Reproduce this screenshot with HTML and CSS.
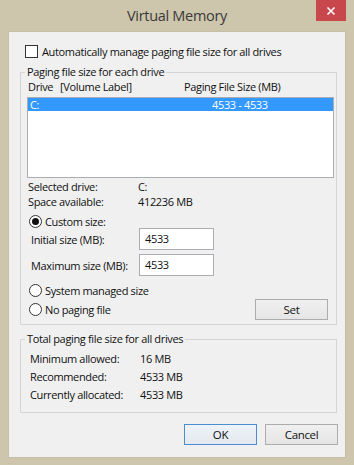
FILE: index.html
```html
<!DOCTYPE html>
<html>
<head>
<meta charset="utf-8">
<link rel="stylesheet" href="styles.css">
</head>
<body>
<div class="window">
  <div class="titlebar">
    <span class="title">Virtual Memory</span>
    <div class="close"><svg width="10" height="10" viewBox="0 0 10 10"><path d="M1.5 1.5 L8.5 8.5 M8.5 1.5 L1.5 8.5" stroke="#fff" stroke-width="1.6" fill="none"/></svg></div>
  </div>
  <div class="client">
    <div class="auto-row"><span class="checkbox"></span><span>Automatically manage paging file size for all drives</span></div>

    <fieldset class="group group-drive">
      <legend>Paging file size for each drive</legend>
      <div class="list-header"><span class="col-drive">Drive</span><span class="col-label">[Volume Label]</span><span>Paging File Size (MB)</span></div>
      <div class="listbox">
        <div class="list-row selected"><span class="cell-drive">C:</span><span>4533 - 4533</span></div>
      </div>
      <div class="info-row first"><span class="info-label">Selected drive:</span><span>C:</span></div>
      <div class="info-row"><span class="info-label">Space available:</span><span>412236 MB</span></div>
      <div class="radio-row custom"><span class="radio checked"></span><span>Custom size:</span></div>
      <div class="field-row initial"><span class="field-label">Initial size (MB):</span><span class="textbox">4533</span></div>
      <div class="field-row maximum"><span class="field-label">Maximum size (MB):</span><span class="textbox">4533</span></div>
      <div class="radio-row system"><span class="radio"></span><span>System managed size</span></div>
      <div class="nopaging-row">
        <div class="radio-row"><span class="radio"></span><span>No paging file</span></div>
        <span class="button set">Set</span>
      </div>
    </fieldset>

    <fieldset class="group group-total">
      <legend>Total paging file size for all drives</legend>
      <div class="total-row first"><span class="total-label">Minimum allowed:</span><span>16 MB</span></div>
      <div class="total-row"><span class="total-label">Recommended:</span><span>4533 MB</span></div>
      <div class="total-row"><span class="total-label">Currently allocated:</span><span>4533 MB</span></div>
    </fieldset>

    <div class="buttons">
      <span class="button default">OK</span>
      <span class="button">Cancel</span>
    </div>
  </div>
</div>
</body>
</html>
```

FILE: styles.css
```css
html, body {
  margin: 0;
  padding: 0;
}
body {
  width: 354px;
  height: 465px;
  overflow: hidden;
  background: #cdc5ac;
  font-family: "Open Sans", "Noto Sans", sans-serif;
  font-size: 11px;
  letter-spacing: -0.35px;
  color: #111;
}
.window {
  width: 354px;
  height: 465px;
}
.titlebar {
  position: relative;
  height: 31px;
  display: flex;
  justify-content: center;
  align-items: center;
}
.title {
  font-size: 14.5px;
  letter-spacing: -0.3px;
  color: #3a3a3a;
}
.close {
  position: absolute;
  top: 0;
  right: 8px;
  width: 30px;
  height: 21px;
  background: #c7474c;
  display: flex;
  align-items: center;
  justify-content: center;
}
.client {
  box-sizing: border-box;
  margin: 0 8px;
  height: 427px;
  background: #f0f0f0;
  border: 1px solid #c6bfa8;
  display: flex;
  flex-direction: column;
}
.auto-row {
  display: flex;
  align-items: center;
  height: 13px;
  margin-top: 13px;
  padding-left: 16px;
  gap: 4px;
  line-height: 13px;
}
.checkbox {
  box-sizing: border-box;
  width: 13px;
  height: 13px;
  border: 1px solid #333;
  background: #fff;
  flex: none;
}
.group {
  margin: 0 8px 0 11px;
  padding: 0;
  border: 1px solid #d5d5d5;
  display: flex;
  flex-direction: column;
}
.group legend {
  margin-left: 4px;
  padding: 0 2px;
  line-height: 14px;
  height: 14px;
}
.group-drive {
  margin-top: 7px;
  padding-bottom: 4px;
}
.list-header {
  display: flex;
  margin-top: 1px;
  padding-left: 7px;
  line-height: 14px;
  height: 14px;
}
.col-drive { width: 32px; }
.col-label { width: 124px; }
.listbox {
  box-sizing: border-box;
  margin: 3px 0 0 6px;
  width: 307px;
  height: 81px;
  border: 1px solid #abadb3;
  background: #fff;
}
.list-row {
  display: flex;
  height: 13px;
  line-height: 13px;
  padding-left: 2px;
}
.list-row.selected {
  background: #3399ff;
  color: #fff;
}
.cell-drive { width: 182px; }
.info-row {
  display: flex;
  padding-left: 7px;
  height: 15px;
  line-height: 15px;
}
.info-row.first { margin-top: 1px; }
.info-label { width: 110px; }
.radio-row {
  display: flex;
  align-items: center;
  gap: 3px;
  height: 13px;
  line-height: 13px;
  padding-left: 8px;
}
.radio-row.custom { margin-top: 6px; }
.radio-row.system { margin-top: 8px; }
.radio {
  box-sizing: border-box;
  width: 13px;
  height: 13px;
  border: 1px solid #333;
  border-radius: 50%;
  background: #fff;
  flex: none;
  display: flex;
  align-items: center;
  justify-content: center;
}
.radio.checked::after {
  content: "";
  width: 7px;
  height: 7px;
  border-radius: 50%;
  background: #111;
}
.field-row {
  display: flex;
  align-items: center;
  height: 22px;
  padding-left: 10px;
}
.field-row.maximum { margin-top: 4px; }
.field-label { width: 108px; }
.textbox {
  box-sizing: border-box;
  width: 75px;
  height: 22px;
  border: 1px solid #abadb3;
  background: #fff;
  padding: 2px 0 0 5px;
  line-height: 15px;
}
.nopaging-row {
  display: flex;
  justify-content: space-between;
  align-items: center;
  height: 21px;
  margin-top: 2px;
  padding-right: 8px;
}
.nopaging-row .radio-row { padding-left: 8px; }
.button {
  box-sizing: border-box;
  width: 73px;
  height: 21px;
  border: 1px solid #acacac;
  background: linear-gradient(#f0f0f0, #e5e5e5);
  display: flex;
  align-items: center;
  justify-content: center;
  font-size: 11.5px;
}
.button.default {
  border-color: #4a8fd0;
  background: linear-gradient(#eef3f8, #e3e9ef);
}
.group-total {
  margin-top: 7px;
  padding-bottom: 8px;
}
.total-row {
  display: flex;
  padding-left: 9px;
  height: 18px;
  line-height: 18px;
}
.total-row.first { margin-top: 4px; }
.total-label { width: 110px; }
.buttons {
  display: flex;
  justify-content: flex-end;
  gap: 8px;
  margin-top: 11px;
  padding-right: 7px;
}
```
